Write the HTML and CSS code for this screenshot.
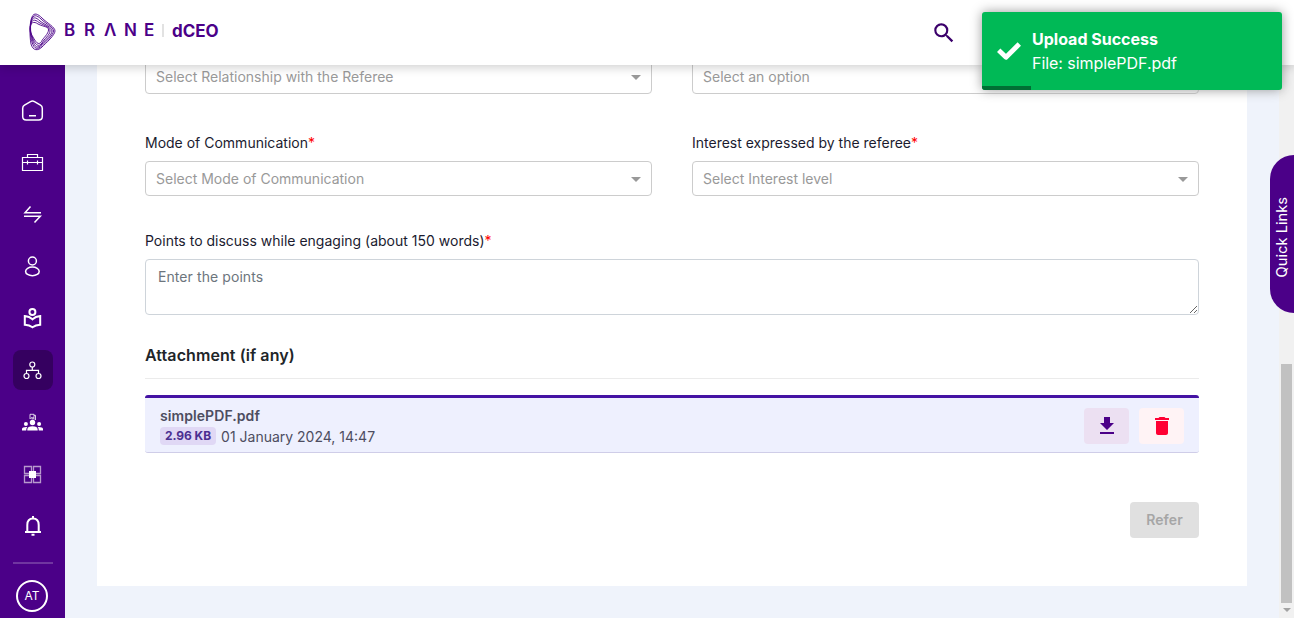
FILE: index.html
```html
<!DOCTYPE html>
<html lang="en">
<head>
<meta charset="utf-8">
<title>BRANE dCEO</title>
<link rel="stylesheet" href="styles.css">
</head>
<body>
<header class="topbar">
  <svg class="logo" width="28" height="40" viewBox="0 0 28 40" fill="none" stroke="#4b0088" stroke-width="0.9">
    <path d="M4 5C6 0 10 2 14 6C19 11 27 15 27 19C27 23 18 31 14 35C10 39 5 39 3 32C1.500 24 1.500 10 4 5Z"/>
    <path d="M3.500 8C5 2 9 3 13 7C18 12 25.500 15 25.500 19C25.500 23 18 29 14 33.500C10 38 6 37.500 4 30C2 23 1.500 13 3.500 8Z"/>
    <path d="M3 11C4 4 8 5 12 9C17 13 24 15 24 19C24 23 17 28 14 32C10 37 7 36 4.500 28C2.500 22 2 16 3 11Z"/>
    <path d="M2.500 14C3 7 7 7 11 10.500C17 14 22.500 15 22 19C22 23 16 27 14 31C11 35 8 34 5 27C3 22 2 19 2.500 14Z"/>
    <path d="M2 17C2 10 6 9 10 12C16 15 21 14.500 20.500 18C20.500 22 15 26 13.500 29.500C11 33 9 32 5.500 26C3.500 22 2 21 2 17Z"/>
  </svg>
  <div class="wordmark"><span>B</span><span>R</span><span>Λ</span><span>N</span><span>E</span></div>
  <div class="product">dCEO</div>
  <svg class="search" width="26" height="26" viewBox="0 0 24 24" fill="#3b006b"><path d="M15.5 14h-.79l-.28-.27A6.47 6.47 0 0 0 16 9.5 6.5 6.5 0 1 0 9.500 16c1.610 0 3.090-.590 4.230-1.570l.27.28v.79l5 4.990L20.490 19l-4.990-5zm-6 0C7.010 14 5 11.990 5 9.500S7.010 5 9.500 5 14 7.010 14 9.500 11.990 14 9.500 14z"/></svg>
</header>

<div class="body">
  <nav class="sidebar">
    <a class="nav-item"><svg width="24" height="24" viewBox="0 0 24 24"><path d="M2.700 10.200C2.700 8.800 3.300 7.900 4.500 7.200L10.500 3.600Q12.500 2.500 14.500 3.600L20.500 7.200C21.700 7.900 22.300 8.800 22.300 10.200V18.500Q22.300 22 18.800 22H6.200Q2.700 22 2.700 18.500ZM9 17.700H16"/></svg></a>
    <a class="nav-item"><svg width="24" height="24" viewBox="0 0 24 24" class="thin"><path d="M2.500 7.500H22.500V20.500H2.500ZM7.500 7.500V4.500H17.500V7.500M2.500 12.500H22.500M7.500 10.500V14.500M17.500 10.500V14.500"/></svg></a>
    <a class="nav-item"><svg width="24" height="24" viewBox="0 0 24 24"><path d="M10.500 4.500L5 10.700H21M4 14.300H20.300L14.500 20.500"/></svg></a>
    <a class="nav-item"><svg width="24" height="24" viewBox="0 0 24 24"><circle cx="12.400" cy="7" r="4"/><ellipse cx="12.400" cy="17.400" rx="6.800" ry="4.300"/></svg></a>
    <a class="nav-item"><svg width="24" height="24" viewBox="0 0 24 24" class="bold"><circle cx="12.400" cy="6" r="3"/><path d="M4.800 10.100Q9.500 10.500 12.500 13.300Q15.500 10.500 20.200 10.100V18.700Q15.500 19 12.500 21.300Q9.500 19 4.800 18.700Z"/></svg></a>
    <a class="nav-item active"><svg width="24" height="24" viewBox="0 0 24 24" class="thin"><circle cx="12.300" cy="6.500" r="2.500"/><circle cx="6.500" cy="18" r="2.500"/><circle cx="18.500" cy="18" r="2.500"/><path d="M12.300 9V12.300M6.500 15.500V12.300H18.500V15.500"/></svg></a>
    <a class="nav-item"><svg width="24" height="24" viewBox="0 0 24 24" class="solid"><circle cx="12.500" cy="12.500" r="2.700"/><circle cx="5.900" cy="14" r="2"/><circle cx="19.100" cy="14" r="2"/><path d="M7.300 20.500V19.500Q7.500 16.200 12.500 16.200Q17.500 16.200 17.700 19.500V20.500ZM2 20.500V19Q2.300 16.800 7.300 17.100Q6.300 18 6.200 20.500ZM23 20.500V19Q22.700 16.800 17.700 17.100Q18.700 18 18.800 20.500Z"/><path class="outline" d="M10 4.300H14V7.800H11L10 8.800ZM14 5.300H15.500V9.800L14.500 8.800H11.500"/></svg></a>
    <a class="nav-item"><svg width="24" height="24" viewBox="0 0 24 24" class="grid"><path d="M4.500 4.500H11.500V11.500H4.500ZM13.500 4.500H20.500V11.500H13.500ZM4.500 13.500H11.500V20.500H4.500ZM13.500 13.500H20.500V20.500H13.500Z"/><rect x="9" y="9" width="7" height="7"/></svg></a>
    <a class="nav-item"><svg width="24" height="24" viewBox="0 0 24 24" class="bold"><path d="M5 18H21M7.300 18V11Q7.300 4.500 13 4.500T18.700 11V18M13 2V5M11.500 20.800H14.500"/></svg></a>
    <div class="divider"></div>
    <div class="avatar">AT</div>
  </nav>

  <main class="content">
    <form class="panel">
      <div class="row row-top">
        <div class="select"><span>Select Relationship with the Referee</span><i class="caret"></i></div>
        <div class="select"><span>Select an option</span><i class="caret"></i></div>
      </div>
      <div class="row">
        <div class="field"><label>Mode of Communication<b>*</b></label><div class="select"><span>Select Mode of Communication</span><i class="caret"></i></div></div>
        <div class="field"><label>Interest expressed by the referee<b>*</b></label><div class="select"><span>Select Interest level</span><i class="caret"></i></div></div>
      </div>
      <div class="field points"><label>Points to discuss while engaging (about 150 words)<b>*</b></label><textarea class="textarea" placeholder="Enter the points"></textarea></div>
      <h2 class="heading">Attachment (if any)</h2>
      <div class="file">
        <div class="file-info">
          <div class="file-name">simplePDF.pdf</div>
          <div class="file-meta"><span class="size">2.96 KB</span><span class="date">01 January 2024, 14:47</span></div>
        </div>
        <div class="file-btn download"><svg width="24" height="24" viewBox="0 0 24 24" fill="#4b0088"><path d="M19 9h-4V3H9v6H5l7 7 7-7zM5 18v2h14v-2H5z"/></svg></div>
        <div class="file-btn remove"><svg width="24" height="24" viewBox="0 0 24 24" fill="#ff0033"><path d="M6 19c0 1.100.9 2 2 2h8c1.100 0 2-.9 2-2V7H6v12zM19 4h-3.500l-1-1h-5l-1 1H5v2h14V4z"/></svg></div>
      </div>
      <div class="actions"><div class="refer">Refer</div></div>
    </form>
  </main>
  <div class="scrollbar"><div class="thumb"></div><i class="scroll-arrow"></i></div>
</div>

<div class="quick"><span>Quick Links</span></div>
<div class="toast">
  <svg width="24" height="18" viewBox="0 0 24 18" fill="none" stroke="#fff" stroke-width="4.800" stroke-linejoin="round"><path d="M1.700 8.200L9 15.300L22.300 2"/></svg>
  <div><div class="toast-title">Upload Success</div><div class="toast-text">File: simplePDF.pdf</div></div>
  <div class="progress"></div>
</div>
</body>
</html>
```
FILE: styles.css
```css
* { box-sizing: border-box; }
body { margin: 0; height: 618px; overflow: hidden; display: flex; flex-direction: column; font-family: Inter, sans-serif; font-size: 14px; color: #212529; background: #eff3fb; }
svg { display: block; flex: none; }

.topbar { height: 65px; flex: none; position: relative; z-index: 2; display: flex; align-items: center; background: #fff; padding: 0 337px 4px 28px; box-shadow: 0 2px 10px rgba(0,0,0,.2); color: #4b0088; }
.logo { margin-top: 2px; }
.wordmark { display: flex; padding-left: 8px; font-size: 17px; font-weight: 600; line-height: 20px; width: 106px; margin-top: -1px; }
.wordmark span { width: 20px; flex: none; }
.product { border-left: 2px solid #e2e2e2; padding-left: 8px; height: 13px; line-height: 15px; font-size: 17px; font-weight: 700; }
.search { margin-left: auto; margin-top: 5px; }

.body { display: flex; flex: 1; min-height: 0; }
.sidebar { width: 65px; flex: none; background: #4b0088; display: flex; flex-direction: column; align-items: center; gap: 12px; padding-top: 25px; }
.nav-item { width: 40px; height: 40px; flex: none; border-radius: 8px; display: flex; align-items: center; justify-content: center; }
.nav-item svg { fill: none; stroke: #fff; stroke-width: 1.500; margin-right: 1px; }
.nav-item .thin { stroke-width: 1.200; }
.nav-item .bold { stroke-width: 2; }
.nav-item .solid { fill: #fff; stroke: none; }
.solid .outline { fill: none; stroke: #fff; stroke-width: .8; }
.nav-item .grid { stroke: #b899cd; stroke-width: 1.300; }
.grid rect { fill: #fff; stroke: none; }
.active { background: #350060; }
.divider { width: 40px; height: 2px; background: #7035a0; margin-top: 4px; flex: none; }
.avatar { width: 32px; height: 32px; flex: none; margin-top: 4px; margin-right: 1px; border: 2px solid #fff; border-radius: 50%; color: #fff; font-size: 12px; line-height: 28px; text-align: center; }

.content { flex: 1; padding: 0 32px 32px; }
.panel { height: 527px; background: #fff; padding: 0 48px; }
.row { display: grid; grid-template-columns: 1fr 1fr; gap: 40px; }
.row-top { margin-top: -6px; padding-bottom: 39px; }
.select { height: 35px; border: 1px solid #ccc; border-radius: 4px; padding: 0 10px; display: flex; align-items: center; justify-content: space-between; color: #999; background: #fff; }
.caret { border: 5px solid transparent; border-top-color: #999; border-bottom: 0; margin-top: 1px; }
.field label { display: block; line-height: 20px; margin-bottom: 8px; color: #1b1b2f; }
.field b { color: red; font-weight: 400; }
.points { margin-top: 35px; }
.textarea { display: block; width: 100%; height: 56px; border: 1px solid #ced4da; border-radius: 4px; padding: 7px 12px; font: 14px/20px Inter, sans-serif; letter-spacing: .08px; outline: 0; }
.textarea::placeholder { color: #6c757d; }
.heading { margin: 28px 0 16px; height: 36px; border-bottom: 1px solid #ebebeb; font-size: 16px; font-weight: 600; line-height: 24px; letter-spacing: .08px; }
.file { height: 58px; background: #eef0fe; border-top: 3px solid #4412a3; border-bottom: 1px solid #cfcde8; border-radius: 3px; display: flex; align-items: center; padding: 2px 15px 0; gap: 10px; }
.file-info { flex: 1; color: #4d4d60; padding-top: 2px; }
.file-name { font-weight: 600; line-height: 20px; letter-spacing: .08px; }
.file-meta { display: flex; align-items: center; gap: 5px; line-height: 22px; }
.size { background: #e0d8f5; color: #4b2f91; font-size: 12px; font-weight: 700; line-height: 18px; border-radius: 4px; padding: 0 5px; margin-top: -2px; letter-spacing: -.05px; }
.file-btn { width: 45px; height: 36px; border-radius: 4px; display: flex; align-items: center; justify-content: center; }
.download { background: #ece0f2; }
.remove { background: #fff3f5; }
.actions { display: flex; justify-content: flex-end; margin-top: 49px; }
.refer { width: 69px; height: 36px; border-radius: 4px; background: #e0e0e0; color: #a6a6a6; font-weight: 600; line-height: 36px; text-align: center; letter-spacing: .1px; }

.scrollbar { width: 15px; flex: none; background: #f1f1f1; display: flex; flex-direction: column; align-items: center; padding-top: 299px; }
.thumb { width: 11px; height: 239px; background: #c1c1c1; }
.scroll-arrow { border: 4px solid transparent; border-top-color: #a3a3a3; border-bottom: 0; margin-top: 5px; }

.quick { position: absolute; right: 0; top: 155px; width: 24px; height: 158px; border-radius: 24px 0 0 24px; background: #4b0088; color: #fff; display: flex; align-items: center; justify-content: center; padding: 6px 1px 0 0; font-size: 14.700px; }
.quick span { writing-mode: vertical-rl; transform: rotate(180deg); }
.toast { position: absolute; z-index: 3; left: 982px; top: 12px; width: 300px; height: 78px; background: #00b956; border-radius: 3px; color: #fff; box-shadow: 0 0 12px #999; display: flex; align-items: center; gap: 11px; padding-left: 15px; font-size: 16px; line-height: 24px; }
.toast-title { font-weight: 700; }
.toast-text { letter-spacing: -.05px; }
.progress { position: absolute; left: 0; bottom: 0; width: 49px; height: 4px; background: #006f34; border-radius: 0 0 0 3px; }
```
